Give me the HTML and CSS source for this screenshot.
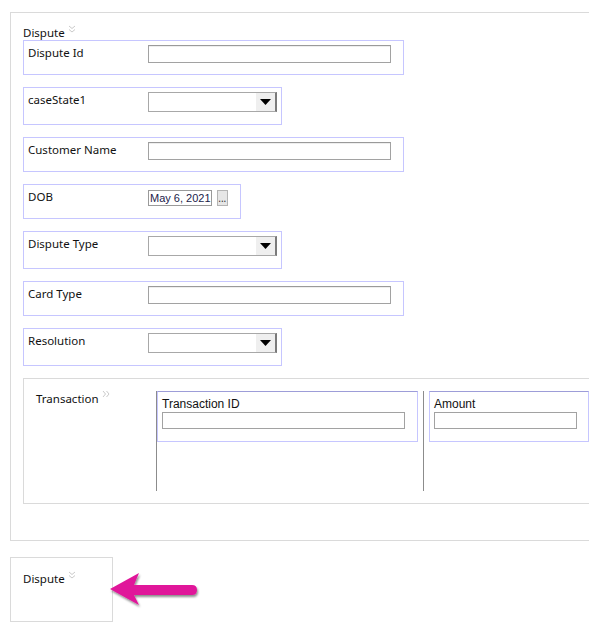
FILE: index.html
```html
<!DOCTYPE html>
<html>
<head>
<meta charset="utf-8">
<link rel="stylesheet" href="styles.css">
</head>
<body>
<div class="page">
  <section class="panel">
    <div class="panel-head">
      <span class="title">Dispute</span>
      <svg class="chev-down" width="8" height="8" viewBox="0 0 8 8"><path d="M1 1 L4 3.5 L7 1 M1 4.5 L4 7 L7 4.5" fill="none" stroke="#c4c4c4" stroke-width="0.9"/></svg>
    </div>
    <div class="fields">
      <div class="field text-field wide">
        <label class="lbl">Dispute Id</label>
        <span class="input long"></span>
      </div>
      <div class="field sel-field">
        <label class="lbl">caseState1</label>
        <span class="select"><span class="sel-btn"><svg width="11" height="6" viewBox="0 0 11 6"><path d="M0 0 H11 L5.5 6 Z" fill="#000"/></svg></span></span>
      </div>
      <div class="field text-field wide">
        <label class="lbl">Customer Name</label>
        <span class="input long"></span>
      </div>
      <div class="field text-field date-field">
        <label class="lbl">DOB</label>
        <span class="date">May 6, 2021</span>
        <span class="dots">...</span>
      </div>
      <div class="field sel-field">
        <label class="lbl">Dispute Type</label>
        <span class="select"><span class="sel-btn"><svg width="11" height="6" viewBox="0 0 11 6"><path d="M0 0 H11 L5.5 6 Z" fill="#000"/></svg></span></span>
      </div>
      <div class="field text-field wide">
        <label class="lbl">Card Type</label>
        <span class="input long"></span>
      </div>
      <div class="field sel-field">
        <label class="lbl">Resolution</label>
        <span class="select"><span class="sel-btn"><svg width="11" height="6" viewBox="0 0 11 6"><path d="M0 0 H11 L5.5 6 Z" fill="#000"/></svg></span></span>
      </div>
      <div class="txn">
        <div class="txn-label">
          <span>Transaction</span>
          <svg class="chev-right" width="8" height="8" viewBox="0 0 8 8"><path d="M1 1 L3.5 4 L1 7 M4.5 1 L7 4 L4.5 7" fill="none" stroke="#c4c4c4" stroke-width="0.9"/></svg>
        </div>
        <div class="table">
          <div class="col col1">
            <div class="cell">
              <div class="cell-lbl">Transaction ID</div>
              <span class="cell-input id-input"></span>
            </div>
          </div>
          <div class="col col2">
            <div class="cell">
              <div class="cell-lbl">Amount</div>
              <span class="cell-input amt-input"></span>
            </div>
          </div>
        </div>
      </div>
    </div>
  </section>
  <section class="mini">
    <span class="title">Dispute</span>
    <svg class="chev-down" width="8" height="8" viewBox="0 0 8 8"><path d="M1 1 L4 3.5 L7 1 M1 4.5 L4 7 L7 4.5" fill="none" stroke="#c4c4c4" stroke-width="0.9"/></svg>
  </section>
</div>
<svg class="arrow" width="100" height="46" viewBox="105 566 100 46">
  <defs>
    <filter id="sh" x="-20%" y="-30%" width="140%" height="170%">
      <feDropShadow dx="1" dy="2" stdDeviation="1.2" flood-color="#000" flood-opacity="0.45"/>
    </filter>
  </defs>
  <path d="M110 589 L139 573 L134 585 L192 585 Q197 585 197 590 Q197 595 192 595 L134 595 L139 605 Z" fill="#e0179a" filter="url(#sh)"/>
</svg>
</body>
</html>
```
FILE: styles.css
```css
html, body {
  margin: 0;
  padding: 0;
  background: #ffffff;
  overflow: hidden;
}
body {
  font-family: "Noto Sans", "Open Sans", sans-serif;
  font-size: 11.5px;
  color: #111111;
  width: 589px;
  height: 634px;
  position: relative;
}
.page {
  padding: 12px 0 0 10px;
}
.panel {
  width: 640px;
  box-sizing: border-box;
  height: 529px;
  border: 1px solid #dadada;
  border-right: none;
  padding: 12px 0 0 12px;
}
.panel-head {
  height: 15px;
  line-height: 15px;
  display: flex;
  align-items: flex-start;
}
.title {
  line-height: 15px;
}
.chev-down {
  margin-left: 3px;
  margin-top: 0;
}
.fields {
  display: flex;
  flex-direction: column;
  align-items: flex-start;
  gap: 12px;
}
.field {
  box-sizing: border-box;
  border: 1px solid #c6c6ff;
  padding: 4px 12px 0 4px;
  display: flex;
  align-items: flex-start;
}
.text-field {
  height: 35px;
}
.sel-field {
  height: 38px;
  padding-right: 4px;
}
.wide {
  width: 381px;
}
.lbl {
  width: 120px;
  line-height: 16px;
  flex: none;
}
.input {
  display: block;
  box-sizing: border-box;
  height: 18px;
  border: 1px solid #a2a2a2;
  border-top-color: #9a9a9a;
  box-shadow: inset 0 1px 0 #eeeeee;
}
.long {
  width: 243px;
}
.select {
  box-sizing: border-box;
  width: 129px;
  height: 20px;
  border: 1px solid #a8a8a8;
  border-right: 2px solid #7a7a7a;
  display: flex;
  justify-content: flex-end;
}
.sel-btn {
  width: 19px;
  height: 18px;
  background: #efefef;
  display: flex;
  align-items: center;
  justify-content: center;
}
.date-field {
  width: 218px;
}
.date {
  box-sizing: border-box;
  margin-top: 1px;
  width: 64px;
  height: 16px;
  border: 1px solid #9a9a9a;
  line-height: 14px;
  font-family: "Liberation Sans", Arial, sans-serif;
  font-size: 11px;
  padding-left: 1px;
  white-space: nowrap;
  color: #1b1b4a;
}
.dots {
  box-sizing: border-box;
  margin-left: 5px;
  margin-top: 1px;
  width: 12px;
  height: 16px;
  border: 1px solid #b4b4b4;
  background: #e6e6e6;
  font-size: 10px;
  line-height: 14px;
  text-align: center;
  color: #333;
}
.txn {
  box-sizing: border-box;
  width: 610px;
  height: 126px;
  border: 1px solid #dadada;
  border-right: none;
  padding: 12px 0 0 12px;
  display: flex;
  align-items: flex-start;
}
.txn-label {
  width: 120px;
  flex: none;
  line-height: 15px;
  display: flex;
  align-items: flex-start;
}
.chev-right {
  margin-left: 3px;
  margin-top: -1px;
}
.table {
  display: flex;
  height: 100px;
  border-left: 1px solid #8c8c8c;
}
.col {
  box-sizing: border-box;
  height: 100px;
}
.col1 {
  width: 267px;
  border-right: 1px solid #8c8c8c;
}
.col2 {
  padding-left: 5px;
}
.cell {
  box-sizing: border-box;
  height: 51px;
  border: 1px solid #c6c6ff;
  border-top-color: #9d9dd8;
  padding: 5px 12px 0 4px;
}
.col1 .cell {
  width: 261px;
}
.col2 .cell {
  width: 160px;
}
.cell-lbl {
  font-family: "Liberation Sans", Arial, sans-serif;
  font-size: 12px;
  line-height: 15px;
  color: #111;
}
.cell-input {
  display: block;
  box-sizing: border-box;
  height: 17px;
  border: 1px solid #a2a2a2;
}
.id-input {
  width: 243px;
}
.amt-input {
  width: 143px;
}
.mini {
  box-sizing: border-box;
  margin-top: 16px;
  width: 103px;
  height: 65px;
  border: 1px solid #dadada;
  padding: 13px 0 0 12px;
  display: flex;
  align-items: flex-start;
}
.arrow {
  position: absolute;
  left: 105px;
  top: 566px;
}
```
